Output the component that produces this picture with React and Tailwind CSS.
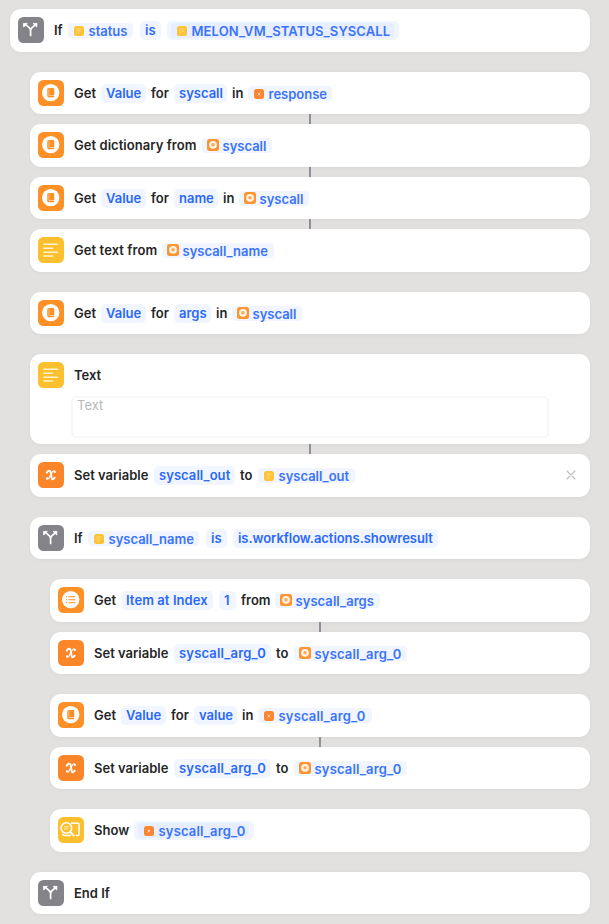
import React from "react";

/* ---------- action icons ---------- */

function Tile({ color, children }) {
  return (
    <svg className="mt-2 ml-2 size-[26px] shrink-0" viewBox="0 0 26 26" fill="none">
      <rect width="26" height="26" rx="5.5" fill={color} />
      {children}
    </svg>
  );
}

const BranchIcon = () => (
  <Tile color="#848389">
    <path d="M12.6 18.4v-5.2c0-1-.4-1.600-1.200-2.400L7.400 7.400M12.600 13.200c0-1 .4-1.600 1.200-2.400l4-3.400" stroke="#fff" strokeWidth="1.700" strokeLinecap="round" />
    <path d="M5.400 6.400h4L5.700 10zM19 6.400h-4L18.700 10z" fill="#fff" stroke="#fff" strokeWidth=".8" strokeLinejoin="round" />
  </Tile>
);

const BookIcon = () => (
  <Tile color="#fd9127">
    <circle cx="12.700" cy="12.600" r="8.700" fill="#fff" />
    <path d="M9.300 9.500c0-.9.6-1.400 1.400-1.400h4.600c.6 0 .9.3.9.9v6.400H10.700v.6h5.500v1.200h-5.500c-.8 0-1.400-.5-1.400-1.300z" fill="#fd9127" />
    <path d="M10.900 8.300v6.900" stroke="#fff" strokeOpacity=".65" strokeWidth=".6" />
  </Tile>
);

const ListIcon = () => (
  <Tile color="#fd9127">
    <circle cx="12.700" cy="12.600" r="8.700" fill="#fff" />
    <path d="M10.800 9.700h6.300M10.800 12.700h6.300M10.800 15.700h6.300" stroke="#fd9127" strokeWidth="1.100" strokeLinecap="round" />
    <path d="M8.600 9.700h.01M8.600 12.700h.01M8.600 15.700h.01" stroke="#fd9127" strokeWidth="1.300" strokeLinecap="round" />
  </Tile>
);

const TextIcon = () => (
  <Tile color="#fcc02e">
    <path d="M5.900 7.300h13.500M5.900 11.300h8.700M5.900 15.200h13.500M5.900 19.100h8.700" stroke="#fff3cf" strokeWidth="1.500" strokeLinecap="round" />
  </Tile>
);

const VariableIcon = () => (
  <Tile color="#fb8529">
    <path d="M8.800 10.600c.5-1.300 1.300-1.900 2.200-1.900 1.200 0 1.600.9 1.800 2.200l.7 4.400c.2 1.300.6 1.900 1.300 1.900.8 0 1.400-.6 1.800-1.500" stroke="#fff" strokeWidth="2" strokeLinecap="round" />
    <path d="M16.900 9.500c-.3-.5-.6-.7-1.100-.7-1 0-1.700 1.100-2.800 3.200-1.300 2.700-2 5-3.200 5-.5 0-.8-.2-1-.6" stroke="#fff" strokeWidth="1.200" strokeLinecap="round" />
    <circle cx="16.800" cy="9.900" r="1.150" fill="#fff" />
    <circle cx="9" cy="16.400" r="1.150" fill="#fff" />
  </Tile>
);

const ShowIcon = () => (
  <Tile color="#fcc02e">
    <path d="M13.500 6.200h6.200c.8 0 1.300.5 1.300 1.300v9.700c0 .8-.5 1.300-1.300 1.300h-1.200M4.700 17.200c.3.900.9 1.300 1.800 1.300h5.700" stroke="#fff" strokeWidth="1.500" strokeLinecap="round" />
    <circle cx="8.400" cy="11" r="5.300" fill="#fcc02e" stroke="#fff" strokeWidth="1.600" />
    <path d="M5.900 9.800h5M5.900 11.900h3.800" stroke="#fff" strokeOpacity=".8" strokeWidth="1" />
    <path d="M12.300 14.900l3.500 3.700" stroke="#fff" strokeWidth="2" strokeLinecap="round" />
  </Tile>
);

/* ---------- small icons inside variable tokens ---------- */

const MiniText = () => (
  <svg className="ml-[6px] size-[10px] shrink-0" viewBox="0 0 10 10">
    <rect width="10" height="10" rx="2.500" fill="#fdc336" />
    <path d="M2.500 3h5M2.500 5h4M2.500 7h3" stroke="#ffdd85" strokeWidth=".8" />
  </svg>
);

const MiniVariable = () => (
  <svg className="ml-[6px] size-[10px] shrink-0" viewBox="0 0 10 10">
    <rect width="10" height="10" rx="2.500" fill="#fb8531" />
    <path d="M3.800 3.500l2.200 3M6.300 3.500l-2.600 3" stroke="#ffd9bb" strokeWidth=".9" />
  </svg>
);

const MiniRing = () => (
  <svg className="-mt-px ml-[5px] size-[12px] shrink-0" viewBox="0 0 12 12">
    <rect width="12" height="12" rx="2.500" fill="#fd9532" />
    <circle cx="6" cy="5.800" r="3.900" fill="#fff4e6" />
    <circle cx="6" cy="5.800" r="1.700" fill="#fda856" />
  </svg>
);

/* ---------- sentence pieces ---------- */

const Word = ({ w, children }) => (
  <span className={`shrink-0 pb-[2px] ${w}`}>{children}</span>
);

const Pill = ({ w, children }) => (
  <span className={`flex h-[19px] shrink-0 items-center rounded-[5px] bg-[#f1f5ff] pb-[2px] pl-[5px] text-[#2a69f9] ${w}`}>
    {children}
  </span>
);

const minis = { text: MiniText, variable: MiniVariable, ring: MiniRing };

function Token({ w, icon, tone = "bg-[#f1f5ff]", children }) {
  const Mini = minis[icon];
  return (
    <span className={`flex h-[15px] shrink-0 items-center rounded-[4px] text-[#3b74fa] ${tone} ${w}`}>
      <Mini />
      <span className={icon === "ring" ? "ml-[3.500px]" : "ml-[4.500px]"}>{children}</span>
    </span>
  );
}

const NestedToken = ({ w, inner, icon, children }) => (
  <span className={`flex h-[19px] shrink-0 items-center rounded-[5px] bg-[#f1f5ff] pl-[4px] ${w}`}>
    <Token w={inner} icon={icon} tone="bg-[#e7eeff]">{children}</Token>
  </span>
);

function Card({ icon: Icon, tall, indent = "ml-[30px]", gap = "mt-[20px]", children, body, close }) {
  return (
    <section className={`mr-[19px] rounded-[11px] bg-white shadow-[0_1px_4px_rgba(0,0,0,0.04)] ${tall} ${indent} ${gap}`}>
      <div className="flex h-[42px]">
        <Icon />
        <div className="ml-[10px] flex h-[43px] grow items-center gap-[5px]">{children}</div>
        {close}
      </div>
      {body}
    </section>
  );
}

const Link = ({ indent = "ml-[309px]" }) => (
  <div className={`h-[10px] w-[2px] bg-[#8f8f99] ${indent}`} />
);

const CloseIcon = () => (
  <svg className="mt-[16px] mr-[14px] size-[10px]" viewBox="0 0 10 10">
    <path d="M1 1l8 8M9 1L1 9" stroke="#bdbdbd" strokeWidth="1.100" strokeLinecap="round" />
  </svg>
);

const Value = () => <Pill w="w-[45px]">Value</Pill>;

export default function App() {
  return (
    <main className="h-[924px] w-[609px] overflow-hidden bg-[#e2e1df] pt-[9px] font-['Inter',sans-serif] text-[13px] leading-[16px] font-semibold whitespace-nowrap text-[#262626]">
      <Card icon={BranchIcon} tall="h-[43px]" indent="ml-[10px]" gap="mt-0">
        <Word w="w-[9px]">If</Word>
        <Token w="w-[65px]" icon="text">status</Token>
        <Pill w="ml-[2px] w-[21px]">is</Pill>
        <NestedToken w="ml-px w-[232px] tracking-[0.11px]" inner="w-[223px]" icon="text">MELON_VM_STATUS_SYSCALL</NestedToken>
      </Card>

      <Card icon={BookIcon} tall="h-[42px]">
        <Word w="w-[22px]">Get</Word>
        <Value />
        <Word w="w-[18px]">for</Word>
        <Pill w="w-[53px]">syscall</Pill>
        <Word w="w-[11px]">in</Word>
        <Token w="w-[84px]" icon="variable">response</Token>
      </Card>
      <Link />
      <Card icon={BookIcon} tall="h-[43px]" gap="mt-0">
        <Word w="w-[123px] tracking-[0.05px]">Get dictionary from</Word>
        <Token w="w-[70px]" icon="ring">syscall</Token>
      </Card>
      <Link />
      <Card icon={BookIcon} tall="h-[42px]" gap="mt-0">
        <Word w="w-[22px]">Get</Word>
        <Value />
        <Word w="w-[18px]">for</Word>
        <Pill w="w-[44px]">name</Pill>
        <Word w="w-[11px]">in</Word>
        <Token w="w-[70px]" icon="ring">syscall</Token>
      </Card>
      <Link />
      <Card icon={TextIcon} tall="h-[43px]" gap="mt-0">
        <Word w="w-[83px] tracking-[0.08px]">Get text from</Word>
        <Token w="w-[112px]" icon="ring">syscall_name</Token>
      </Card>

      <Card icon={BookIcon} tall="h-[42px]">
        <Word w="w-[22px]">Get</Word>
        <Value />
        <Word w="w-[18px]">for</Word>
        <Pill w="w-[37px]">args</Pill>
        <Word w="w-[11px]">in</Word>
        <Token w="w-[70px]" icon="ring">syscall</Token>
      </Card>

      <Card
        icon={TextIcon}
        tall="h-[90px]"
        body={
          <div className="ml-[41px] h-[42px] w-[478px] rounded-[5px] border-2 border-[#f7f7f7] pl-[4px] leading-[15px] font-normal text-[#b9b9b9]">
            Text
          </div>
        }
      >
        <Word w="w-[26px]">Text</Word>
      </Card>
      <Link />
      <Card icon={VariableIcon} tall="h-[43px]" gap="mt-0" close={<CloseIcon />}>
        <Word w="w-[75px]">Set variable</Word>
        <Pill w="w-[81px] tracking-[0.06px]">syscall_out</Pill>
        <Word w="w-[13px]">to</Word>
        <Token w="w-[97px]" icon="text">syscall_out</Token>
      </Card>

      <Card icon={BranchIcon} tall="h-[42px]">
        <Word w="w-[9px]">If</Word>
        <Token w="w-[111px]" icon="text">syscall_name</Token>
        <Pill w="ml-[2px] w-[21px]">is</Pill>
        <Pill w="ml-px w-[205px] tracking-[-0.04px]">is.workflow.actions.showresult</Pill>
      </Card>

      <Card icon={ListIcon} tall="h-[43px]" indent="ml-[50px]">
        <Word w="w-[22px]">Get</Word>
        <Pill w="w-[92px] tracking-[0.08px]">Item at Index</Pill>
        <Pill w="ml-px w-[17px]">1</Pill>
        <Word w="w-[29px]">from</Word>
        <Token w="w-[105px] tracking-[0.06px]" icon="ring">syscall_args</Token>
      </Card>
      <Link indent="ml-[319px]" />
      <Card icon={VariableIcon} tall="h-[42px]" indent="ml-[50px]" gap="mt-0">
        <Word w="w-[75px]">Set variable</Word>
        <Pill w="w-[97px] tracking-[0.18px]">syscall_arg_0</Pill>
        <Word w="w-[13px]">to</Word>
        <Token w="w-[113px] tracking-[0.18px]" icon="ring">syscall_arg_0</Token>
      </Card>

      <Card icon={BookIcon} tall="h-[43px]" indent="ml-[50px]">
        <Word w="w-[22px]">Get</Word>
        <Value />
        <Word w="w-[18px]">for</Word>
        <Pill w="w-[43px]">value</Pill>
        <Word w="w-[11px]">in</Word>
        <Token w="w-[114px] tracking-[0.18px]" icon="variable">syscall_arg_0</Token>
      </Card>
      <Link indent="ml-[319px]" />
      <Card icon={VariableIcon} tall="h-[42px]" indent="ml-[50px]" gap="mt-0">
        <Word w="w-[75px]">Set variable</Word>
        <Pill w="w-[97px] tracking-[0.18px]">syscall_arg_0</Pill>
        <Word w="w-[13px]">to</Word>
        <Token w="w-[113px] tracking-[0.18px]" icon="ring">syscall_arg_0</Token>
      </Card>

      <Card icon={ShowIcon} tall="h-[43px]" indent="ml-[50px]">
        <Word w="w-[35px]">Show</Word>
        <NestedToken w="w-[120px] tracking-[0.18px]" inner="w-[111px]" icon="variable">syscall_arg_0</NestedToken>
      </Card>

      <Card icon={BranchIcon} tall="h-[42px]">
        <Word w="w-[36px]">End If</Word>
      </Card>
    </main>
  );
}
